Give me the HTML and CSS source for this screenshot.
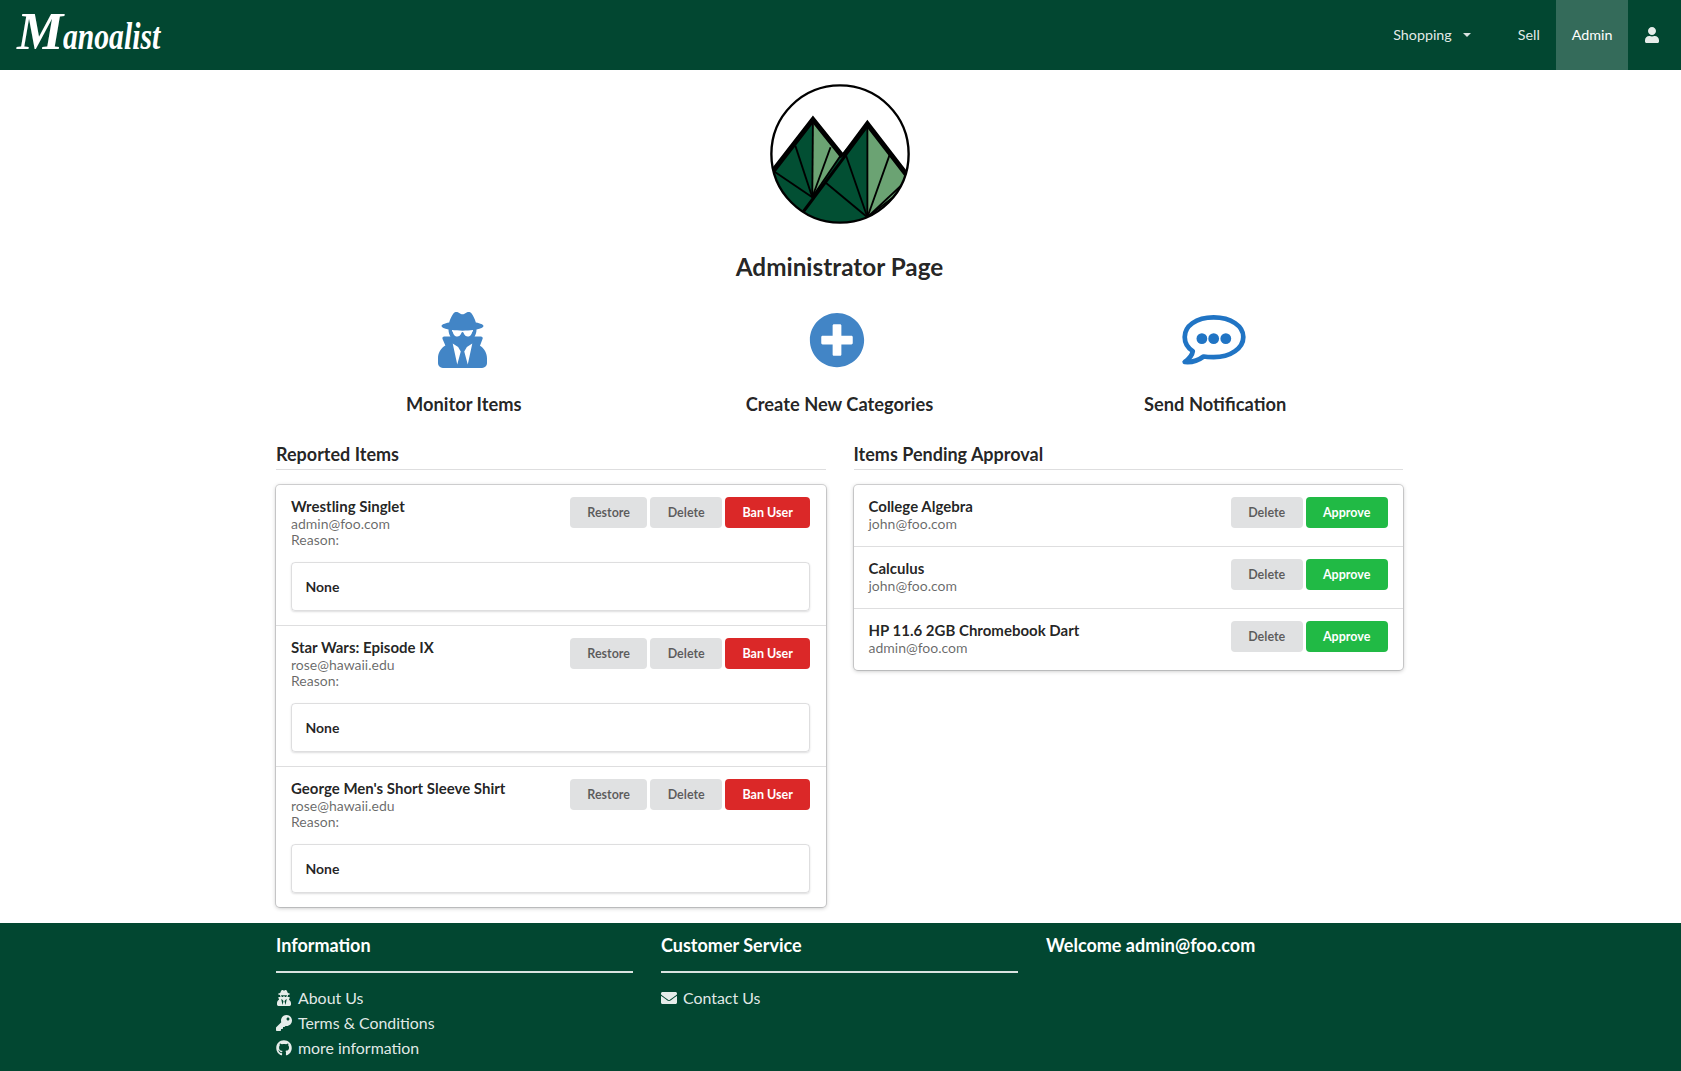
FILE: index.html
```html
<!DOCTYPE html>
<html lang="en">
<head>
<meta charset="utf-8">
<title>Manoalist</title>
<link rel="stylesheet" href="styles.css">
</head>
<body>
<svg class="defs" aria-hidden="true">
  <symbol id="i-secret" viewBox="0 0 448 512"><path d="M383.9 308.3l23.9-62.6c4-10.5-3.7-21.7-15-21.7h-58.5c11-18.9 17.8-40.6 17.8-64v-.3c39.2-7.8 64-19.1 64-31.7 0-13.3-27.3-25.1-70.1-33-9.2-32.8-27-65.8-40.6-82.8-9.5-11.9-25.9-15.6-39.5-8.8l-27.6 13.8c-9 4.5-19.6 4.5-28.6 0L182.1 3.4c-13.6-6.8-30-3.1-39.5 8.8-13.5 17-31.4 50-40.6 82.8-42.7 7.9-70 19.7-70 33 0 12.6 24.8 23.9 64 31.7v.3c0 23.4 6.8 45.1 17.8 64H56.3c-11.5 0-19.2 11.7-14.7 22.3l25.8 60.2C27.3 329.8 0 372.7 0 422.4v44.8C0 491.9 20.1 512 44.8 512h358.4c24.7 0 44.8-20.1 44.8-44.8v-44.8c0-48.4-25.8-90.4-64.1-114.1zM176 480l-41.6-192 49.6 32 24 40-32 120zm96 0l-32-120 24-40 49.6-32L272 480zm41.7-298.5c-3.9 11.9-7 24.6-16.5 33.4-10.1 9.3-48 22.4-64-25-2.8-8.4-15.4-8.4-18.3 0-17 50.2-56 32.4-64 25-9.5-8.8-12.7-21.5-16.5-33.4-.8-2.5-6.3-5.7-6.3-5.8v-10.8c28.3 3.6 61 5.8 96 5.8s67.7-2.1 96-5.8v10.8c-.1.1-5.6 3.2-6.4 5.8z"/></symbol>
  <symbol id="i-plus" viewBox="0 0 512 512"><path d="M256 8C119 8 8 119 8 256s111 248 248 248 248-111 248-248S393 8 256 8zm144 276c0 6.6-5.4 12-12 12h-92v92c0 6.6-5.4 12-12 12h-56c-6.6 0-12-5.4-12-12v-92h-92c-6.6 0-12-5.4-12-12v-56c0-6.6 5.4-12 12-12h92v-92c0-6.6 5.4-12 12-12h56c6.6 0 12 5.4 12 12v92h92c6.6 0 12 5.4 12 12v56z"/></symbol>
  <symbol id="i-key" viewBox="0 0 512 512"><path d="M512 176.001C512 273.203 433.202 352 336 352c-11.22 0-22.19-1.062-32.827-3.069l-24.012 27.014A23.999 23.999 0 0 1 261.223 384H224v40c0 13.255-10.745 24-24 24h-40v40c0 13.255-10.745 24-24 24H24c-13.255 0-24-10.745-24-24v-78.059c0-6.365 2.529-12.47 7.029-16.971l161.802-161.802C163.108 213.814 160 195.271 160 176 160 78.798 238.797.001 335.999 0 433.488-.001 512 78.511 512 176.001zM336 128c0 26.51 21.49 48 48 48s48-21.49 48-48-21.49-48-48-48-48 21.49-48 48z"/></symbol>
  <symbol id="i-github" viewBox="0 0 496 512"><path d="M244.8 8C106.1 8 0 113.3 0 252c0 110.9 69.8 205.8 169.5 239.2 12.8 2.3 17.3-5.6 17.3-12.1 0-6.2-.3-40.4-.3-61.4 0 0-70 15-84.7-29.8 0 0-11.4-29.1-27.8-36.6 0 0-22.9-15.7 1.6-15.4 0 0 24.9 2 38.6 25.8 21.9 38.6 58.6 27.5 72.9 20.9 2.3-16 8.8-27.1 16-33.7-55.9-6.2-112.3-14.3-112.3-110.5 0-27.5 7.6-41.3 23.6-58.9-2.6-6.5-11.1-33.3 2.6-67.9 20.9-6.5 69 27 69 27 20-5.6 41.5-8.5 62.8-8.5s42.8 2.9 62.8 8.5c0 0 48.1-33.6 69-27 13.7 34.7 5.2 61.4 2.6 67.9 16 17.7 25.8 31.5 25.8 58.9 0 96.5-58.9 104.2-114.8 110.5 9.2 7.9 17 22.9 17 46.4 0 33.7-.3 75.4-.3 83.6 0 6.5 4.6 14.4 17.3 12.1C428.2 457.8 496 362.9 496 252 496 113.3 383.5 8 244.8 8z"/></symbol>
  <symbol id="i-mail" viewBox="0 0 512 512"><path d="M502.3 190.8c3.9-3.1 9.7-.2 9.7 4.7V400c0 26.5-21.5 48-48 48H48c-26.5 0-48-21.5-48-48V195.6c0-5 5.7-7.8 9.7-4.7 22.4 17.4 52.1 39.5 154.1 113.6 21.1 15.4 56.7 47.8 92.2 47.6 35.7.3 72-32.8 92.3-47.6 102-74.1 131.6-96.3 154-113.7zM256 320c23.2.4 56.6-29.2 73.4-41.4 132.7-96.3 142.8-104.7 173.4-128.7 5.8-4.5 9.2-11.5 9.2-18.9v-19c0-26.5-21.5-48-48-48H48C21.5 64 0 85.5 0 112v19c0 7.4 3.4 14.3 9.2 18.9 30.6 23.9 40.7 32.4 173.4 128.7 16.8 12.2 50.2 41.8 73.4 41.4z"/></symbol>
  <symbol id="i-user" viewBox="0 0 448 512"><path d="M224 256c70.7 0 128-57.3 128-128S294.7 0 224 0 96 57.3 96 128s57.3 128 128 128zm89.6 32h-16.7c-22.2 10.2-46.9 16-72.9 16s-50.6-5.8-72.9-16h-16.7C60.2 288 0 348.2 0 422.4V464c0 26.5 21.5 48 48 48h352c26.5 0 48-21.5 48-48v-41.6c0-74.2-60.2-134.4-134.4-134.4z"/></symbol>
</svg>

<header class="navbar">
  <a class="brand"><span class="brand-cap">M</span><span class="brand-rest">anoalist</span></a>
  <nav class="nav">
    <a class="nav-item nav-dropdown">Shopping<span class="caret"></span></a>
    <a class="nav-item nav-sell">Sell</a>
    <a class="nav-item is-active">Admin</a>
    <a class="nav-item nav-user"><svg class="nav-user-icon"><use href="#i-user"/></svg></a>
  </nav>
</header>

<main class="page">
  <div class="hero">
    <svg class="hero-logo" viewBox="90 40 420 420" role="img" aria-label="Manoalist logo">
      <defs><clipPath id="disc"><circle cx="300" cy="250" r="203"/></clipPath></defs>
      <g clip-path="url(#disc)">
        <path fill="#024f33" d="M220 145L90 310V470H510V400L381 435V160L305 250Z"/>
        <path fill="#6ba373" d="M220 145L305 250L218 375Z"/>
        <path fill="#6ba373" d="M381 160L510 322V350L381 435Z"/>
        <g fill="none" stroke="#000" stroke-width="5.5">
          <path d="M220 145L218 378"/>
          <path d="M168 226L218 378"/>
          <path d="M272 230L218 378"/>
          <path d="M100 298L218 378"/>
          <path d="M305 250L218 378"/>
          <path d="M381 160V437"/>
          <path d="M318 255L381 437"/>
          <path d="M258 335L381 437"/>
          <path d="M447 252L381 437"/>
          <path d="M500 325L381 437"/>
          <path d="M500 345L381 437"/>
        </g>
        <path fill="none" stroke="#000" stroke-width="9" d="M192 420L318 252"/>
        <path fill="none" stroke="#000" stroke-width="15" d="M85 322L220 148L308 258"/>
        <path fill="none" stroke="#000" stroke-width="15" d="M312 254L381 161L510 328"/>
      </g>
      <circle cx="300" cy="250" r="203" fill="none" stroke="#000" stroke-width="7"/>
    </svg>
    <h1 class="hero-title">Administrator Page</h1>
  </div>

  <section class="actions">
    <div class="action">
      <svg class="action-icon tone-soft secret"><use href="#i-secret"/></svg>
      <h2 class="action-label">Monitor Items</h2>
    </div>
    <div class="action">
      <svg class="action-icon tone-soft plus"><use href="#i-plus"/></svg>
      <h2 class="action-label">Create New Categories</h2>
    </div>
    <div class="action">
      <svg class="action-icon bubble" viewBox="88 42 196 154">
        <path class="bubble-line" d="M188 52C135 52 102 78 102 110C102 128 112 143 126 152C124 166 114 176 102 184C122 186 142 180 158 168C168 170 178 170 188 170C240 170 276 142 276 110C276 78 240 52 188 52Z"/>
        <circle class="bubble-dot" cx="153" cy="115" r="16"/>
        <circle class="bubble-dot" cx="188" cy="115" r="16"/>
        <circle class="bubble-dot" cx="224" cy="115" r="16"/>
      </svg>
      <h2 class="action-label">Send Notification</h2>
    </div>
  </section>

  <section class="lists">
    <div class="list-col">
      <h3 class="list-title">Reported Items</h3>
      <div class="card">
        <article class="row row-report">
          <div class="row-top">
            <div class="row-text">
              <div class="row-name">Wrestling Singlet</div>
              <div class="row-meta">admin@foo.com</div>
              <div class="row-meta">Reason:</div>
            </div>
            <div class="btns"><button class="btn">Restore</button><button class="btn">Delete</button><button class="btn btn-red">Ban User</button></div>
          </div>
          <div class="reason">None</div>
        </article>
        <article class="row row-report">
          <div class="row-top">
            <div class="row-text">
              <div class="row-name">Star Wars: Episode IX</div>
              <div class="row-meta">rose@hawaii.edu</div>
              <div class="row-meta">Reason:</div>
            </div>
            <div class="btns"><button class="btn">Restore</button><button class="btn">Delete</button><button class="btn btn-red">Ban User</button></div>
          </div>
          <div class="reason">None</div>
        </article>
        <article class="row row-report">
          <div class="row-top">
            <div class="row-text">
              <div class="row-name">George Men's Short Sleeve Shirt</div>
              <div class="row-meta">rose@hawaii.edu</div>
              <div class="row-meta">Reason:</div>
            </div>
            <div class="btns"><button class="btn">Restore</button><button class="btn">Delete</button><button class="btn btn-red">Ban User</button></div>
          </div>
          <div class="reason">None</div>
        </article>
      </div>
    </div>
    <div class="list-col">
      <h3 class="list-title">Items Pending Approval</h3>
      <div class="card">
        <article class="row">
          <div class="row-top">
            <div class="row-text">
              <div class="row-name">College Algebra</div>
              <div class="row-meta">john@foo.com</div>
            </div>
            <div class="btns"><button class="btn">Delete</button><button class="btn btn-green">Approve</button></div>
          </div>
        </article>
        <article class="row">
          <div class="row-top">
            <div class="row-text">
              <div class="row-name">Calculus</div>
              <div class="row-meta">john@foo.com</div>
            </div>
            <div class="btns"><button class="btn">Delete</button><button class="btn btn-green">Approve</button></div>
          </div>
        </article>
        <article class="row">
          <div class="row-top">
            <div class="row-text">
              <div class="row-name">HP 11.6 2GB Chromebook Dart</div>
              <div class="row-meta">admin@foo.com</div>
            </div>
            <div class="btns"><button class="btn">Delete</button><button class="btn btn-green">Approve</button></div>
          </div>
        </article>
      </div>
    </div>
  </section>
</main>

<footer class="footer">
  <div class="footer-inner">
    <div class="footer-col">
      <h4 class="footer-title">Information</h4>
      <hr class="footer-rule">
      <a class="footer-link"><svg class="footer-icon"><use href="#i-secret"/></svg>About Us</a>
      <a class="footer-link"><svg class="footer-icon"><use href="#i-key"/></svg>Terms &amp; Conditions</a>
      <a class="footer-link"><svg class="footer-icon"><use href="#i-github"/></svg>more information</a>
    </div>
    <div class="footer-col">
      <h4 class="footer-title">Customer Service</h4>
      <hr class="footer-rule">
      <a class="footer-link"><svg class="footer-icon"><use href="#i-mail"/></svg>Contact Us</a>
    </div>
    <div class="footer-col">
      <h4 class="footer-title">Welcome admin@foo.com</h4>
    </div>
  </div>
</footer>
</body>
</html>
```

FILE: styles.css
```css
* { box-sizing: border-box; }
html, body { margin: 0; padding: 0; }
body {
  min-height: 1071px;
  display: flex;
  flex-direction: column;
  font-family: Lato, "Open Sans", sans-serif;
  font-size: 14px;
  line-height: 20px;
  color: rgba(0, 0, 0, .87);
  background: #fff;
  overflow-x: hidden;
}
.defs { display: none; }

.navbar {
  height: 70px;
  flex: none;
  display: flex;
  align-items: stretch;
  justify-content: space-between;
  background: #024731;
  color: #fff;
}
.brand {
  padding: 6px 0 0 17px;
  font-family: "Liberation Serif", serif;
  font-style: italic;
  font-weight: 700;
  font-size: 38px;
  line-height: 52px;
  color: #fff;
  white-space: nowrap;
}
.brand-cap { font-size: 52px; }
.brand-rest { display: inline-block; transform: scaleX(.78); transform-origin: left center; }
.nav { display: flex; align-items: stretch; font-size: 14.3px; }
.nav-item {
  display: flex;
  align-items: center;
  padding: 0 15.5px;
  color: rgba(255, 255, 255, .9);
}
.nav-sell { padding-right: 16.5px; }
.nav-dropdown { margin-right: 16px; }
.caret {
  width: 0;
  height: 0;
  margin-left: 11px;
  border-left: 4px solid transparent;
  border-right: 4px solid transparent;
  border-top: 4px solid rgba(255, 255, 255, .85);
}
.is-active { background: rgba(255, 255, 255, .2); color: #fff; }
.nav-user { padding: 0 22px 0 17px; }
.nav-user-icon { width: 14px; height: 16px; fill: rgba(255, 255, 255, .9); }

.page {
  flex: 1;
  width: 1127px;
  margin: 0 278px 0 276px;
}
.hero { text-align: center; }
.hero-logo { display: block; width: 142px; height: 142px; margin: 13px auto 0; }
.hero-title {
  margin: 27px 0 0;
  font-size: 24.3px;
  line-height: 30px;
  font-weight: 700;
}

.actions {
  display: grid;
  grid-template-columns: repeat(3, 1fr);
  margin-top: 30px;
}
.action { display: flex; flex-direction: column; align-items: center; }
.action-icon { display: block; height: 56px; }
.tone-soft { fill: #4285c6; }
.secret { width: 49px; margin-right: 3px; }
.plus { width: 56px; margin-right: 4px; }
.bubble { width: 66px; margin-right: 4px; }
.bubble-line { fill: none; stroke: #2074c4; stroke-width: 14; stroke-linejoin: round; }
.bubble-dot { fill: #2074c4; }
.action-label {
  margin: 24px 0 0;
  font-size: 18.3px;
  line-height: 24px;
  font-weight: 700;
}

.lists {
  display: grid;
  grid-template-columns: 1fr 1fr;
  gap: 28px;
  margin-top: 26px;
}
.list-title {
  margin: 0 0 15px;
  padding-bottom: 3px;
  font-size: 18px;
  line-height: 24px;
  font-weight: 700;
  border-bottom: 1px solid rgba(34, 36, 38, .15);
}
.card {
  border-radius: 4px;
  background: #fff;
  box-shadow: 0 1px 4px 0 rgba(34, 36, 38, .3), 0 0 0 1px #dcdcdd;
}
.row { padding: 12px 15.5px 14px 15px; }
.row + .row { border-top: 1px solid rgba(34, 36, 38, .15); }
.row-top { display: flex; justify-content: space-between; align-items: flex-start; }
.row-name { font-size: 15px; line-height: 19px; font-weight: 700; }
.row-meta { font-size: 14px; line-height: 16px; color: rgba(0, 0, 0, .6); }
.btns { display: flex; gap: 3px; }
.btn {
  height: 31px;
  min-width: 72px;
  padding: 0 17.2px;
  border: 0;
  border-radius: 4px;
  background: #e0e1e2;
  color: rgba(0, 0, 0, .6);
  font-family: inherit;
  font-size: 12.5px;
  font-weight: 700;
}
.btn-red { background: #db2828; color: #fff; }
.btn-green { background: #21ba45; color: #fff; }
.row-report .row-top { margin-bottom: 14px; }
.reason {
  height: 49px;
  padding: 14px 14px 14px 13.5px;
  border: 1px solid rgba(34, 36, 38, .15);
  border-radius: 4px;
  box-shadow: 0 1px 2px 0 rgba(34, 36, 38, .15);
  font-weight: 700;
}

.footer {
  flex: none;
  height: 148px;
  background: #024731;
  color: #fff;
}
.footer-inner {
  width: 1127px;
  margin: 0 278px 0 276px;
  padding-top: 10px;
  display: grid;
  grid-template-columns: repeat(3, 1fr);
  gap: 28px;
}
.footer-title { margin: 0; font-size: 18px; line-height: 24px; font-weight: 700; }
.footer-rule { margin: 14px 0 12px; border: 0; border-top: 2px solid rgba(255, 255, 255, .85); }
.footer-link {
  display: flex;
  align-items: center;
  height: 25px;
  font-size: 15.9px;
  color: rgba(255, 255, 255, .9);
}
.footer-icon {
  flex: none;
  width: 16px;
  height: 16px;
  margin-right: 6px;
  fill: rgba(255, 255, 255, .9);
}
```
